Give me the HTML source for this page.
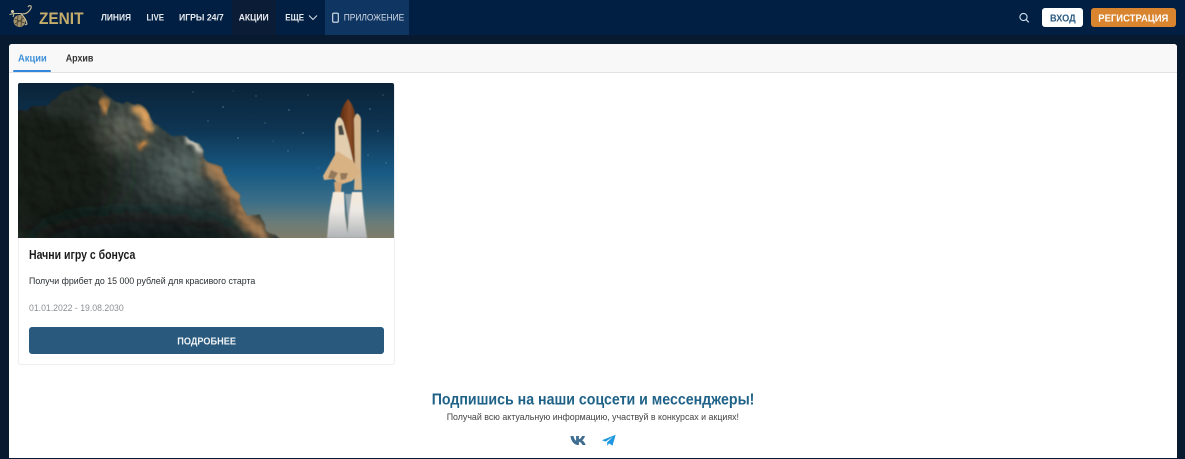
<!DOCTYPE html>
<html lang="ru"><head><meta charset="utf-8"><title>Zenit</title>
<style>
*{box-sizing:border-box;margin:0;padding:0}
html,body{width:1185px;height:459px;overflow:hidden;background:#081a30;font-family:"Liberation Sans",sans-serif}
.a{position:absolute}
#hdr{left:0;top:0;width:1185px;height:35px;background:#001f42}
#panel{left:9px;top:44px;width:1168px;height:414px;background:#fff;border-radius:3px 3px 0 0}
#tabs{left:9px;top:44px;width:1168px;height:29px;background:#f8f8f8;border-bottom:1px solid #e0e3e6;border-radius:3px 3px 0 0}
text{font-family:"Liberation Sans",sans-serif}
.b{font-weight:bold}
</style></head><body>
<div class="a" id="hdr"></div>
<div class="a" style="left:232px;top:0;width:44px;height:35px;background:#0a1c36"></div>
<div class="a" style="left:325px;top:0;width:84px;height:35px;background:#0f3563"></div>
<div class="a" id="panel"></div>
<div class="a" id="tabs"></div>
<div class="a" style="left:13px;top:70px;width:38px;height:2px;background:#3488dc;border-radius:1px"></div>
<div class="a" style="left:18px;top:83px;width:377px;height:282px;background:#fff;border:1px solid #eceef0;border-radius:3px"></div>

<svg class="a" style="left:18px;top:83px;border-radius:2px 2px 0 0" width="376" height="155" viewBox="0 0 376 155">
<defs>
<linearGradient id="sky" x1="0" y1="0" x2="0" y2="1">
<stop offset="0" stop-color="#0a2338"/><stop offset=".3" stop-color="#0e3553"/><stop offset=".58" stop-color="#185a84"/><stop offset=".76" stop-color="#3a6e88"/><stop offset=".9" stop-color="#6a7c78"/><stop offset="1" stop-color="#7f7c6a"/></linearGradient>
<linearGradient id="ex" x1="0" y1="0" x2="0" y2="1"><stop offset="0" stop-color="#f7ead8"/><stop offset=".4" stop-color="#ece8e4"/><stop offset="1" stop-color="#b0b4b7"/></linearGradient>
<linearGradient id="tank" x1="0" y1="0" x2="1" y2="0"><stop offset="0" stop-color="#5a2c14"/><stop offset=".6" stop-color="#8a4a22"/><stop offset="1" stop-color="#6a3a1c"/></linearGradient>
<filter id="tex" filterUnits="userSpaceOnUse" x="-30" y="-10" width="430" height="200" color-interpolation-filters="sRGB">
<feTurbulence type="fractalNoise" baseFrequency=".075" numOctaves="2" seed="7" result="n"/>
<feDisplacementMap in="SourceGraphic" in2="n" scale="8" xChannelSelector="R" yChannelSelector="G" result="d"/>
<feDiffuseLighting in="n" surfaceScale="2" lighting-color="#fff" result="l"><feDistantLight azimuth="-45" elevation="62"/></feDiffuseLighting>
<feComposite in="l" in2="d" operator="arithmetic" k1="1.130" k2="0" k3="0" k4="0"/>
<feGaussianBlur stdDeviation=".7"/>
</filter>
<filter id="b3" x="-60%" y="-60%" width="220%" height="220%"><feGaussianBlur stdDeviation="2.500"/></filter>
<filter id="b5" x="-60%" y="-60%" width="220%" height="220%"><feGaussianBlur stdDeviation="5"/></filter>
<filter id="b12" x="-60%" y="-60%" width="220%" height="220%"><feGaussianBlur stdDeviation="14"/></filter>
<filter id="b1"><feGaussianBlur stdDeviation=".55"/></filter>
<clipPath id="cc"><path d="M-30 32L30 22 46 8 68 3 84 6 90 14 104 20 122 20 134 38 146 49 168 55 184 60 186 76 204 87 219 112 229 133 242 131 247 144 262 155 275 190 -30 190Z"/></clipPath>
</defs>
<rect width="376" height="155" fill="url(#sky)"/>
<g fill="#cfe2f0" opacity=".6"><circle cx="175" cy="9" r=".5"/><circle cx="205" cy="24" r=".6"/><circle cx="238" cy="13" r=".5"/><circle cx="271" cy="27" r=".6"/><circle cx="290" cy="12" r=".5"/><circle cx="247" cy="40" r=".5"/><circle cx="220" cy="55" r=".6"/><circle cx="270" cy="68" r=".5"/><circle cx="352" cy="26" r=".6"/><circle cx="365" cy="12" r=".5"/><circle cx="360" cy="48" r=".6"/><circle cx="350" cy="72" r=".5"/><circle cx="285" cy="50" r=".6"/><circle cx="190" cy="38" r=".5"/><circle cx="300" cy="85" r=".4"/><circle cx="368" cy="80" r=".5"/><circle cx="215" cy="8" r=".4"/><circle cx="255" cy="58" r=".4"/></g>

<g filter="url(#tex)">
<g clip-path="url(#cc)">
<rect x="-30" width="330" height="190" fill="#2f3b39"/>
<ellipse cx="30" cy="85" rx="75" ry="75" fill="#141b19" filter="url(#b12)"/>
<ellipse cx="120" cy="160" rx="110" ry="30" fill="#0d1412" filter="url(#b12)"/>
<ellipse cx="55" cy="20" rx="36" ry="16" fill="#252f2c" filter="url(#b5)"/>
<ellipse cx="106" cy="46" rx="24" ry="22" fill="#686a5f" filter="url(#b12)"/>
<ellipse cx="165" cy="85" rx="26" ry="24" fill="#5d6a66" filter="url(#b12)"/>
<path d="M186 80L204 92 218 116 228 138 250 155" stroke="#a97c50" stroke-width="14" fill="none" filter="url(#b5)"/>
<path d="M84 16L88 30" stroke="#cc8d48" stroke-width="7" fill="none" filter="url(#b3)"/>
<path d="M116 24L128 34 130 50" stroke="#cf9656" stroke-width="9" fill="none" filter="url(#b3)"/>
<path d="M120 64L130 58" stroke="#dc8c3e" stroke-width="6" fill="none" filter="url(#b3)"/>
<path d="M168 57L180 60 182 72" stroke="#efe8d8" stroke-width="5" fill="none" filter="url(#b3)"/>
</g>
</g>

<g filter="url(#b1)">
<path d="M327 111h7l-3 34Z" fill="#a9b3b6" opacity=".8"/>
<path d="M315 109h11l1 23 3 23h-21l2-23Z" fill="url(#ex)"/>
<path d="M334 109h10l2 23 3 23h-20l2-23Z" fill="url(#ex)"/>
<path d="M322 75V36q1-12 8-20 7 8 7.500 20V80Z" fill="url(#tank)"/>
<path d="M336 36q2-6 3.500-5.500 3 2 3.500 6V84L344 107H336L337 84Z" fill="#d4b78e"/>
<path d="M317 88V42q1-6 4-8 4 2 5 8L331 60 336 82 338 90Z" fill="#e2cdae"/>
<path d="M319 68L305 93 306 97 316 96 321 102 334 98 343 89 335 78Z" fill="#d9b284"/>
<path d="M313 87l7 3-4 6-6-1ZM322 90h8l-2 6-5 1Z" fill="#94785a"/>
<path d="M320 43l4-1 2 8-5 2ZM321 50h5v2h-5Z" fill="#4a4844"/>
<path d="M316 99h8l-1 10h-6Z" fill="#cfa478"/>
</g>
</svg>

<div class="a" style="left:29px;top:327px;width:355px;height:27px;background:#29597d;border-radius:3px"></div>

<svg class="a" style="left:0;top:0" width="1185" height="459" viewBox="0 0 1185 459">
<circle cx="19.500" cy="21" r="6" fill="#a3926a"/>
<path d="M14.500 19l10 4M15 24l9-6M18 15.500l-1 11M22 16l-1 10" stroke="#4a4536" stroke-width=".9" fill="none"/>
<circle cx="12.500" cy="11.500" r="1.500" fill="#d8ccab"/>
<path d="M9.500 14.500L14 13.500 20 13.500Q26 15 29 11 32 8 31 6 29 5 28 7M21 14Q26 18 27 24L25 25M14 14l-1 3" stroke="#cdbf9a" stroke-width="1.100" fill="none"/>
<text class="b" x="39" y="24" font-size="17" fill="#c4ac6c" textLength="44.500" lengthAdjust="spacingAndGlyphs">ZENIT</text>
<g font-size="9.500" font-weight="bold" fill="#e6e9ee">
<text x="101" y="20.700" textLength="30" lengthAdjust="spacingAndGlyphs">ЛИНИЯ</text>
<text x="146.500" y="20.700" textLength="17.500" lengthAdjust="spacingAndGlyphs">LIVE</text>
<text x="179" y="20.700" textLength="44.700" lengthAdjust="spacingAndGlyphs">ИГРЫ 24/7</text>
<text x="238.700" y="20.700" textLength="30" lengthAdjust="spacingAndGlyphs">АКЦИИ</text>
<text x="285.300" y="20.700" textLength="18.700" lengthAdjust="spacingAndGlyphs">ЕЩЕ</text>
</g>
<path d="M309 15.500l4 4 4-4" stroke="#d5dbe3" stroke-width="1.100" fill="none"/>
<rect x="332.700" y="13.200" width="5.600" height="9" rx="1" stroke="#dfe5ec" stroke-width="1.100" fill="none"/>
<text x="343.700" y="20.700" font-size="9.500" fill="#d5dce6" textLength="60.600" lengthAdjust="spacingAndGlyphs">ПРИЛОЖЕНИЕ</text>
<circle cx="1023.500" cy="17" r="3.600" stroke="#cfe0ee" stroke-width="1.100" fill="none"/>
<path d="M1026.200 19.700l2.600 2.600" stroke="#cfe0ee" stroke-width="1.200"/>
<rect x="1042" y="8" width="41" height="19" rx="3" fill="#fff"/>
<rect x="1091" y="8" width="85" height="19" rx="3" fill="#d9842f"/>
<text class="b" x="1050" y="21.500" font-size="10.500" fill="#2a5a80" textLength="25.700" lengthAdjust="spacingAndGlyphs">ВХОД</text>
<text class="b" x="1098.300" y="21.500" font-size="10.500" fill="#fff" textLength="70" lengthAdjust="spacingAndGlyphs">РЕГИСТРАЦИЯ</text>
<text class="b" x="18" y="61.500" font-size="10.500" fill="#3d8fd8" textLength="28.700" lengthAdjust="spacingAndGlyphs">Акции</text>
<text class="b" x="65.700" y="61.500" font-size="10.500" fill="#333" textLength="27.700" lengthAdjust="spacingAndGlyphs">Архив</text>
<text class="b" x="29" y="259" font-size="12.500" fill="#1b1b1b" textLength="106.300" lengthAdjust="spacingAndGlyphs">Начни игру с бонуса</text>
<text x="29" y="284" font-size="9.500" fill="#2a2f33" textLength="226.300" lengthAdjust="spacingAndGlyphs">Получи фрибет до 15 000 рублей для красивого старта</text>
<text x="29" y="311" font-size="9.500" fill="#8b8f93" textLength="94.700" lengthAdjust="spacingAndGlyphs">01.01.2022 - 19.08.2030</text>
<text class="b" x="177.300" y="344.300" font-size="10.500" fill="#eef2f5" textLength="58.700" lengthAdjust="spacingAndGlyphs">ПОДРОБНЕЕ</text>
<text class="b" x="431.700" y="404.500" font-size="16" fill="#1f6288" textLength="322.700" lengthAdjust="spacingAndGlyphs">Подпишись на наши соцсети и мессенджеры!</text>
<text x="446.700" y="420" font-size="9" fill="#444" textLength="292.300" lengthAdjust="spacingAndGlyphs">Получай всю актуальную информацию, участвуй в конкурсах и акциях!</text>
<path transform="translate(570 434.500)" d="M.5 1.500h3c.5 2.500 1.300 4 2.600 4.800V1.500h2.800v3.300c1.300-.4 2.500-1.600 3.200-3.300h2.900c-.5 2-1.700 3.500-2.900 4.300 1.400.8 2.700 2.200 3.500 4.700h-3.100c-.7-1.800-2-3-3.600-3.300v3.300h-.8C4.500 10.500 1 7 .5 1.500Z" fill="#3f6d90"/>
<path transform="translate(602 434.500)" d="M13.700.3L0 5.700l3.500 1.400L11 2.400 5.200 7.800v3.400l2-2.300 3.300 2.300Z" fill="#1f97df"/>
</svg>
</body></html>
